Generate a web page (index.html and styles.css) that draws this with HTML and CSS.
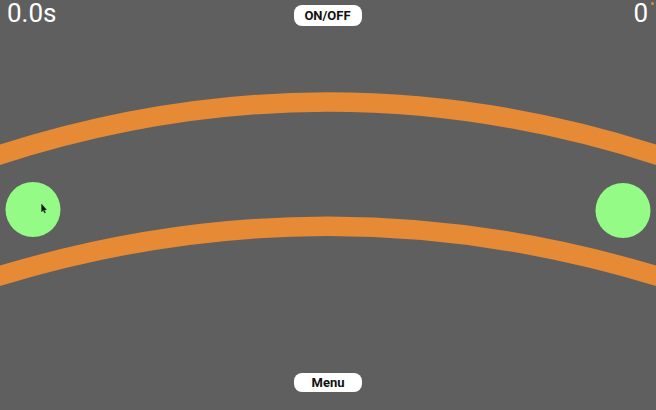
FILE: index.html
```html
<!DOCTYPE html>
<html lang="en">
<head>
    <meta charset="UTF-8">
    <meta name="viewport" content="width=device-width, initial-scale=1.0">
    <title>Track</title>
    <link rel="stylesheet" href="styles.css">
</head>
<body>
    <svg class="field" width="656" height="410" viewBox="0 0 656 410">
        <path class="track" d="M -4 156 Q 328 48 660 156"/>
        <path class="track" d="M -4 277 Q 328 175.5 660 277"/>
        <circle class="ball" cx="33" cy="209.5" r="27.5"/>
        <circle class="ball" cx="623" cy="210.5" r="27.5"/>
        <path class="cursor" d="M41.5 204 L41.5 212 L43.2 210.3 L44.5 213 L45.5 212.6 L44.3 209.9 L46.6 209.7 Z"/>
    </svg>

    <div class="hud">
        <div class="top-bar">
            <div class="timer">0.0s</div>
            <button class="pill toggle">ON/OFF</button>
            <div class="score">0<span class="dot"></span></div>
        </div>
        <div class="bottom-bar">
            <button class="pill menu">Menu</button>
        </div>
    </div>
</body>
</html>
```

FILE: styles.css
```css
body {
    margin: 0;
    padding: 0;
    width: 656px;
    height: 410px;
    background-color: #5f5f5f;
    font-family: Roboto, "Liberation Sans", sans-serif;
    position: relative;
    overflow: hidden;
}
.field {
    position: absolute;
    top: 0;
    left: 0;
}
.track {
    fill: none;
    stroke: #e68a36;
    stroke-width: 19.5;
}
.ball {
    fill: #93fb86;
}
.cursor {
    fill: #111;
    stroke: #333;
    stroke-width: 0.4;
}
.hud {
    position: relative;
    height: 100%;
    display: flex;
    flex-direction: column;
    justify-content: space-between;
}
.top-bar {
    display: flex;
    justify-content: space-between;
    align-items: flex-start;
    padding: 0 8px 0 7px;
}
.timer,
.score {
    color: white;
    font-size: 26px;
    line-height: 20px;
    padding-top: 3px;
    width: 80px;
}
.score {
    text-align: right;
    position: relative;
}
.dot {
    position: absolute;
    right: -6px;
    top: 2px;
    width: 3px;
    height: 3px;
    border-radius: 50%;
    background-color: #e68a36;
}
.pill {
    background-color: white;
    color: #111;
    border: none;
    border-radius: 8px;
    width: 68px;
    padding: 0;
    font-family: Roboto, "Liberation Sans", sans-serif;
    font-weight: bold;
    font-size: 13px;
}
.toggle {
    height: 21px;
    margin-top: 5px;
}
.bottom-bar {
    display: flex;
    justify-content: center;
    padding-bottom: 18px;
}
.menu {
    height: 19px;
}
```
